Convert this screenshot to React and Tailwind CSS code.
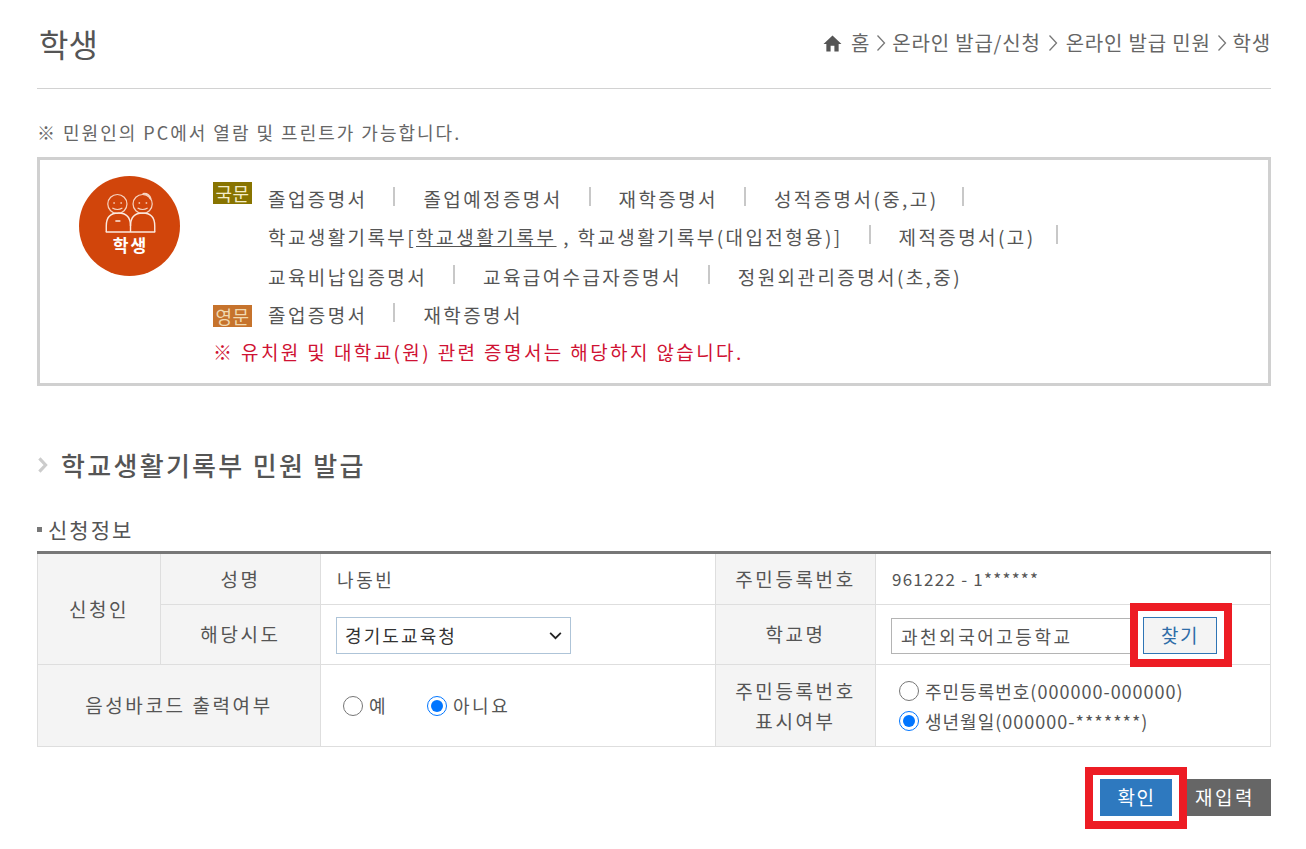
import React from "react";

const Sep = ({ className = "ml-[26px]" }) => <span className={"w-[2px] h-[19px] bg-[#c8c8c8] mr-[28px] self-start mt-[-2px] " + className} />;

function Links({ items, trailing }) {
  return (
    <div className="flex items-start h-[20px]">
      {items.map((t, i) => (
        <React.Fragment key={i}>
          <span className="whitespace-nowrap">{t}</span>
          {i < items.length - 1 && <Sep />}
          {i === items.length - 1 && trailing && <Sep className={trailing} />}
        </React.Fragment>
      ))}
    </div>
  );
}

function Row({ badge, badgeClass, children, className }) {
  return (
    <div className={"flex items-start " + (className || "")}>
      <div className="w-[55px] shrink-0 relative">
        {badge && (
          <span className={"absolute left-0 w-[39px] h-[22px] flex items-center justify-center text-[18px] tracking-[0.5px] leading-none " + badgeClass}>
            {badge}
          </span>
        )}
      </div>
      {children}
    </div>
  );
}

const Chevron = ({ className, sw = 1.3 }) => (
  <svg viewBox="0 0 10 18" className={className} fill="none" stroke="currentColor" strokeWidth={sw}>
    <path d="M1.5 1.5 L8.5 9 L1.5 16.5" />
  </svg>
);

const Th = ({ children, className = "", ...p }) => (
  <th {...p} className={"bg-[#f4f4f4] border border-[#dedede] font-normal text-center text-[19px] tracking-[2.6px] text-[#555] " + className}>
    {children}
  </th>
);
const Td = ({ children, className = "", ...p }) => (
  <td {...p} className={"border border-[#dedede] text-left text-[#555] " + className}>
    {children}
  </td>
);

function Person() {
  return (
    <svg viewBox="0 0 100 100" preserveAspectRatio="none" className="w-[101px] h-[100px] shrink-0">
      <circle cx="50" cy="50" r="50" fill="#d1450b" />
      <g fill="none" stroke="#f6d3c0" strokeWidth="1.2">
        <circle cx="38" cy="28" r="9.5" />
        <circle cx="63" cy="28" r="9.5" />
        <path d="M33 32 Q38 35 43 32 M58 32 Q63 35 68 32" />
        <path d="M34 27 h1.5 M41 27 h1.5 M59 27 h1.5 M66 27 h1.5" strokeWidth="1.4" />
        <path d="M63 18 Q69 17 71 23" strokeWidth="2" />
      </g>
      <g fill="none" stroke="#fbe9df" strokeWidth="1.4">
        <path d="M27 56 V50 Q27 37 39 37 Q51 37 51 50 V56" />
        <path d="M51 50 Q51 37 63 37 Q75 37 75 50 V56" />
        <path d="M26.5 56 H75.5 M36 45 h5" />
      </g>
      <text x="51" y="76" textAnchor="middle" fill="#fff" fontSize="17" letterSpacing="2" fontWeight="700" fontFamily="'Noto Sans CJK KR', sans-serif">학생</text>
    </svg>
  );
}

export default function App() {
  return (
    <div className="w-[1306px] h-[849px] overflow-hidden bg-white pl-[37px] pr-[35px] text-[#555] font-['Noto_Sans_CJK_KR','Noto_Sans',sans-serif]">
      <header className="h-[89px] border-b border-[#d2d2d2] flex items-start justify-between">
        <h1 className="pt-[22px] pl-[2px] text-[32px] leading-[42px] text-[#555] font-normal">학생</h1>
        <nav className="flex items-center pt-[29px] text-[20px] leading-[28px] tracking-[0.8px] text-[#666]">
          <svg viewBox="0 0 20 18" className="w-[19px] h-[17px] mr-[9px] text-[#555]" fill="currentColor">
            <path d="M10 0.5 L19.5 9.5 H16.5 V17.5 H12 V11.5 H8 V17.5 H3.5 V9.5 H0.5 Z" />
          </svg>
          <span>홈</span>
          <Chevron className="w-[10px] h-[18px] mx-[6px] text-[#777]" />
          <span>온라인 발급/신청</span>
          <Chevron className="w-[10px] h-[18px] mx-[7.5px] text-[#777]" />
          <span>온라인 발급 민원</span>
          <Chevron className="w-[10px] h-[18px] mx-[6px] text-[#777]" />
          <span>학생</span>
        </nav>
      </header>

      <p className="mt-[30px] h-[27px] text-[18px] leading-[27px] tracking-[2px] text-[#666] whitespace-nowrap">※ 민원인의 PC에서 열람 및 프린트가 가능합니다.</p>

      <section className="mt-[11px] h-[229px] border-[3px] border-[#d0d0d0] flex pt-[16px] pl-[39px]">
        <Person />
        <div className="ml-[33px] pt-[13px] text-[19px] leading-[20px] tracking-[2.4px] text-[#555]">
          <Row badge="국문" badgeClass="bg-[#887400] text-[#f3ecc8] top-[-7px]" className="h-[38px]">
            <Links items={["졸업증명서", "졸업예정증명서", "재학증명서", "성적증명서(중,고)"]} trailing="ml-[24px]" />
          </Row>
          <Row className="h-[40px]">
            <Links items={[<span key="a">학교생활기록부[<span className="underline tracking-[2.6px]">학교생활기록부</span> , 학교생활기록부(대입전형용)]</span>, "제적증명서(고)"]} trailing="ml-[20px]" />
          </Row>
          <Row className="h-[38px]">
            <Links items={["교육비납입증명서", "교육급여수급자증명서", "정원외관리증명서(초,중)"]} />
          </Row>
          <Row badge="영문" badgeClass="bg-[#c6732c] text-[#f0d9b0] top-0" className="h-[37px]">
            <Links items={["졸업증명서", "재학증명서"]} />
          </Row>
          <p className="text-[#cf1233] tracking-[2.4px] whitespace-nowrap">※ 유치원 및 대학교(원) 관련 증명서는 해당하지 않습니다.</p>
        </div>
      </section>

      <h2 className="mt-[60px] h-[38px] flex items-center text-[26px] leading-[38px] font-medium tracking-[2.3px] text-[#555]">
        <Chevron sw={3.5} className="w-[11px] h-[16px] mr-[13px] text-[#ccc]" />
        학교생활기록부 민원 발급
      </h2>

      <h3 className="mt-[30px] h-[30px] flex items-center text-[21px] leading-[30px] font-normal tracking-[2px] text-[#555]">
        <span className="w-[5px] h-[5px] bg-[#777] mr-[6px]" />신청정보
      </h3>

      <table className="mt-[7px] w-[1233px] table-fixed border-collapse border-t-[3px] border-t-[#777] text-[18px]">
        <colgroup>
          <col className="w-[123px]" />
          <col className="w-[160px]" />
          <col className="w-[395px]" />
          <col className="w-[160px]" />
          <col className="w-[395px]" />
        </colgroup>
        <tbody>
          <tr className="h-[52px]">
            <Th rowSpan={2} className="border-t-0">신청인</Th>
            <Th className="border-t-0">성명</Th>
            <Td className="border-t-0 pl-[16px] tracking-[2.6px]">나동빈</Td>
            <Th className="border-t-0">주민등록번호</Th>
            <Td className="border-t-0 pl-[16px] text-[17px] tracking-[1.25px]">961222 - 1******</Td>
          </tr>
          <tr className="h-[60px]">
            <Th>해당시도</Th>
            <Td className="pl-[15px] pt-[2px]">
              <div className="relative w-[235px] h-[37px]">
                <select defaultValue="경기도교육청" className="block appearance-none w-full h-full border border-[#aec4d8] bg-white pl-[8px] text-[18px] text-[#333] tracking-[2.1px]">
                  <option>경기도교육청</option>
                </select>
                <svg viewBox="0 0 14 9" className="absolute right-[9px] top-[15px] w-[13px] h-[8px] text-[#222] pointer-events-none" fill="none" stroke="currentColor" strokeWidth="2">
                  <path d="M1 1 L7 7 L13 1" />
                </svg>
              </div>
            </Td>
            <Th>학교명</Th>
            <Td className="pl-[15px] pt-[2px]">
              <div className="flex items-center">
                <input readOnly value="과천외국어고등학교" className="w-[246px] h-[36px] border border-[#b4b4b4] pl-[9px] text-[18px] tracking-[2.5px] text-[#555]" />
                <span className="relative ml-[6px]">
                  <button className="block w-[74px] h-[37px] bg-[#f4f4f4] border border-[#2f75b5] text-[19px] tracking-[1.5px] text-[#2f6da8]">찾기</button>
                  <span className="absolute left-[-13px] top-[-14px] w-[102px] h-[64px] border-[8px] border-[#ed1c24]" />
                </span>
              </div>
            </Td>
          </tr>
          <tr className="h-[82px]">
            <Th colSpan={2}>음성바코드 출력여부</Th>
            <Td className="pl-[22px]">
              <div className="flex items-center text-[18px] tracking-[2.5px]">
                <label className="flex items-center mr-[39px]">
                  <input type="radio" name="b" className="w-[20px] h-[20px] m-0 mr-[6px]" />예
                </label>
                <label className="flex items-center">
                  <input type="radio" name="b" defaultChecked className="w-[20px] h-[20px] m-0 mr-[6px]" />아니요
                </label>
              </div>
            </Td>
            <Th className="leading-[30px]">주민등록번호<br />표시여부</Th>
            <Td className="pl-[23px]">
              <div className="flex flex-col gap-[10px] text-[18px] leading-[20px] tracking-[1px]">
                <label className="flex items-center whitespace-nowrap">
                  <input type="radio" name="c" className="w-[20px] h-[20px] m-0 mr-[6px]" />주민등록번호(000000-000000)
                </label>
                <label className="flex items-center whitespace-nowrap">
                  <input type="radio" name="c" defaultChecked className="w-[20px] h-[20px] m-0 mr-[6px]" />생년월일(000000-*******)
                </label>
              </div>
            </Td>
          </tr>
        </tbody>
      </table>

      <div className="mt-[32px] flex justify-end">
        <span className="relative mr-[7px]">
          <button className="block w-[72px] h-[37px] pl-[1px] bg-[#2e79bf] text-white text-[19px] tracking-[1.5px]">확인</button>
          <span className="absolute left-[-15px] top-[-12px] w-[102px] h-[62px] border-[8px] border-[#ed1c24]" />
        </span>
        <button className="w-[92px] h-[37px] bg-[#666] text-white text-[19px] tracking-[2.5px]">재입력</button>
      </div>
    </div>
  );
}
